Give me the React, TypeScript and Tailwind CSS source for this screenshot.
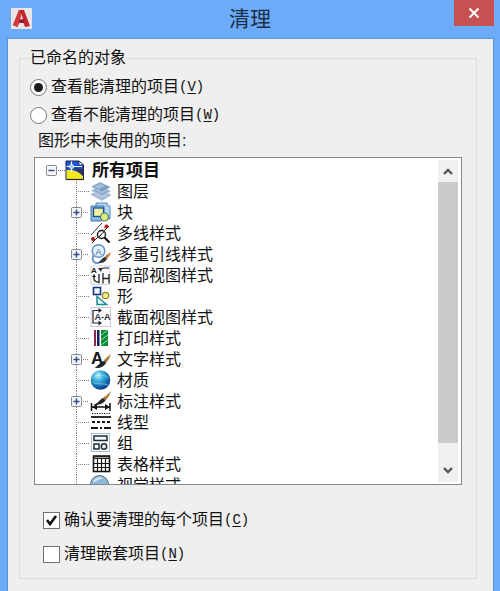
import { useRef, useState, type ReactNode } from "react";

const FONT_CLASSNAME = "font-['Liberation_Sans','Noto_Sans_CJK_SC',sans-serif]";

function BrushShape() {
  return (
    <>
      <path d="M21 5 L15 10 L13 13 L16 14 L19 10 Z" fill="#a9703c" />
      <path d="M20 5.500 L15 10.500" stroke="#e3b884" strokeWidth="1" />
      <path d="M14 12 L16 14 C14 18 8 20 4 18.500 C8 18 9 13.500 14 12 Z" fill="#1d2227" />
    </>
  );
}

const ICONS: Record<string, ReactNode> = {
  layer: (
    <g strokeWidth="0.6">
      <path d="M1 13.500 L10 9 L21 14 L12 19.500 Z" fill="#a9bfd8" stroke="#8fa9c6" />
      <path d="M1 9.500 L10 5 L21 10 L12 15.500 Z" fill="#8fadcd" stroke="#e6eef7" />
      <path d="M1 5.500 L10 1 L21 6 L12 11.500 Z" fill="#7d9dc2" stroke="#e9f0f8" />
      <path d="M4 5.500 L10 2.500 L15 5 L9 8 Z" fill="#a5bedb" />
    </g>
  ),
  block: (
    <>
      <path d="M6 1 H17 L20 4 V17 H6 Z" fill="#b4d5f2" stroke="#4d86bd" />
      <path d="M1 4 H14 V17 L11 19 H1 Z" fill="#8dbbe6" stroke="#3d74ad" />
      <path d="M17 1 V4 H20" fill="#e7f3fd" stroke="#4d86bd" strokeWidth="0.7" />
      <rect x="3.500" y="6" width="10" height="8.500" fill="#eaf3a2" stroke="#244f86" strokeWidth="1.3" />
      <circle cx="14.500" cy="15" r="4" fill="#dcea7e" stroke="#4e7a76" strokeWidth="1.2" />
    </>
  ),
  mline: (
    <>
      <path d="M1 12 L12 0 M2 20 L19 3" stroke="#333" strokeWidth="1" />
      <path d="M3 16 L16 3.500" stroke="#b66" strokeWidth="1" strokeDasharray="2 1" />
      <circle cx="16.500" cy="3.500" r="2" fill="#c3131a" />
      <circle cx="3" cy="16" r="2" fill="#a5131a" />
      <circle cx="11.500" cy="11.500" r="4" fill="#fff" fillOpacity="0.7" stroke="#222" strokeWidth="1.4" />
      <path d="M9 14 L14 9" stroke="#444" strokeWidth="1" />
      <path d="M14.500 14.500 L19.500 19.500" stroke="#111" strokeWidth="2.2" />
    </>
  ),
  mleader: (
    <>
      <path d="M4 11 C2 14 2 17 5 18.500 C8 20 11 18 12 16" fill="none" stroke="#6d9ac8" strokeWidth="2" />
      <circle cx="8.500" cy="7" r="6.300" fill="#e2eefa" stroke="#6394c6" strokeWidth="1.5" />
      <text x="8.500" y="10.500" textAnchor="middle" fontSize="9" fontFamily="Liberation Sans, sans-serif" fill="#3d72ab">
        A
      </text>
      <path d="M21 8 L15 12 L14 15 L17 15 L20 11 Z" fill="#c47b42" />
      <path d="M14.500 13 L17 15 C15 19 11 19.500 8 18.500 C11 17.500 11 14.500 14.500 13 Z" fill="#30353a" />
    </>
  ),
  localView: (
    <>
      <rect x="1" y="1" width="19" height="18.500" fill="#fafafc" stroke="#c9cad8" strokeWidth="0.8" />
      <text x="1" y="8" fontSize="8" fontWeight="bold" fontFamily="Liberation Sans, sans-serif" fill="#222">
        A
      </text>
      <path d="M19 3 H14 C12 3 11 4 10 5" fill="none" stroke="#222" strokeWidth="1.2" />
      <path d="M8 3 L12 3 L11 7 Z M2 12 L4 9 L6 12 Z" fill="#222" />
      <path d="M4 11 V14 C4 16.500 7 17 9 17.500 V9 M13 18.500 V8 M19 18.500 V9 M13 13.500 H19" fill="none" stroke="#222" strokeWidth="1.3" />
    </>
  ),
  shape: (
    <>
      <rect x="3.500" y="1.500" width="7" height="7" fill="#f3f7ff" stroke="#18348c" strokeWidth="1.6" />
      <circle cx="15.500" cy="9.500" r="3.200" fill="#f1ec86" stroke="#8a8425" strokeWidth="1.2" />
      <path d="M7 10.500 V18.500 H16.500 Z" fill="#eefcfa" stroke="#198f91" strokeWidth="1.5" />
    </>
  ),
  sectionView: (
    <>
      <rect x="1" y="0.500" width="19.500" height="19" fill="#fbfbfd" stroke="#c9b9cc" strokeWidth="0.8" />
      <path d="M10 3.500 H3 V16 H10" fill="none" stroke="#26262e" strokeWidth="1.2" />
      <path d="M8.500 1 L12 3.500 L8.500 6 Z M8.500 13.500 L12 16 L8.500 18.500 Z" fill="#26262e" />
      <text x="4.500" y="12.500" fontSize="9" fontWeight="bold" fontFamily="Liberation Sans, sans-serif" fill="#33333c">
        A-A
      </text>
    </>
  ),
  plot: (
    <>
      <rect x="4" y="2" width="2" height="16" fill="#8c2a49" />
      <rect x="7" y="2" width="2.500" height="16" fill="#171c63" />
      <rect x="11" y="2" width="7" height="16" fill="#0c8a35" />
      <path d="M11 7 L18 2 M11 12 L18 7 M11 17 L18 12" stroke="#9be0a9" strokeWidth="1" />
    </>
  ),
  text: (
    <>
      <text x="1" y="15" fontSize="17" fontWeight="bold" fontFamily="Liberation Sans, sans-serif" fill="#15171a">
        A
      </text>
      <BrushShape />
    </>
  ),
  material: (
    <>
      <defs>
        <radialGradient id="material-ball" cx="0.38" cy="0.28" r="0.75">
          <stop offset="0" stopColor="#d9f8ff" />
          <stop offset="0.3" stopColor="#4bbbe2" />
          <stop offset="0.7" stopColor="#176fb5" />
          <stop offset="1" stopColor="#152f86" />
        </radialGradient>
      </defs>
      <circle cx="10.500" cy="10" r="9.800" fill="url(#material-ball)" />
      <path d="M3 8 C6 5 8 8 11 6 S16 6 18 8 M3 12 C7 16 12 12 18 15" fill="none" stroke="#74dbe8" strokeWidth="1.2" strokeOpacity="0.6" />
    </>
  ),
  dimension: (
    <>
      <path d="M21 0 L14 6 L12 9 L15 10 L19 5 Z" fill="#b06e36" />
      <path d="M20.500 0.500 L15 6" stroke="#efc795" strokeWidth="1" />
      <path d="M13 7 L15.500 9.500 C13 13 8 14.500 3 14 C8 12.500 9 9 13 7 Z" fill="#22272b" />
      <path d="M1.500 12 V20 M20 12 V20 M2 16 H20" stroke="#111" strokeWidth="1.5" />
      <path d="M2 16 L7 13 V19 Z M20 16 L15 13 V19 Z" fill="#111" />
    </>
  ),
  linetype: (
    <g stroke="#161616">
      <path d="M2 1.500 H21" strokeWidth="1.2" strokeDasharray="1.2 1.2" />
      <path d="M1 5 H21" strokeWidth="1.8" />
      <path d="M2 10 H21" strokeWidth="1.8" strokeDasharray="3 2" />
      <path d="M1 16 H21" strokeWidth="1.8" strokeDasharray="7 2 2 2" />
    </g>
  ),
  group: (
    <>
      <rect x="1.500" y="0.500" width="18" height="18" fill="none" stroke="#4c79a6" strokeDasharray="1 1" />
      <g fill="#f4f8fb" stroke="#1d2a33" strokeWidth="1.5">
        <rect x="4" y="3" width="13" height="4.500" />
        <rect x="4" y="11" width="5" height="5" />
        <circle cx="14" cy="13.500" r="2.700" />
      </g>
    </>
  ),
  table: (
    <>
      <rect x="3.500" y="2" width="16" height="15.500" fill="#fff" stroke="#161616" strokeWidth="1.6" />
      <path d="M3 2 H20 V5 H3 Z" fill="#222" />
      <path d="M4.500 3.500 H18.500" stroke="#bbb" strokeWidth="0.8" />
      <path d="M7.500 5 V17 M11.500 5 V17 M15.500 5 V17 M4 9.500 H19 M4 13.500 H19" stroke="#161616" strokeWidth="1.2" />
    </>
  ),
  visual: (
    <>
      <circle cx="9.500" cy="9.500" r="9" fill="#8fb9d6" stroke="#56708a" strokeWidth="1" />
      <path d="M3 8 C4 3 10 1 13 3 C9 4 6 6 3 8 Z" fill="#d3e8f5" />
    </>
  ),
};

type TreeItem = {
  label: string;
  icon: string;
  expandable?: boolean;
};

const ITEMS: TreeItem[] = [
  { label: "图层", icon: "layer" },
  { label: "块", icon: "block", expandable: true },
  { label: "多线样式", icon: "mline" },
  { label: "多重引线样式", icon: "mleader", expandable: true },
  { label: "局部视图样式", icon: "localView" },
  { label: "形", icon: "shape" },
  { label: "截面视图样式", icon: "sectionView" },
  { label: "打印样式", icon: "plot" },
  { label: "文字样式", icon: "text", expandable: true },
  { label: "材质", icon: "material" },
  { label: "标注样式", icon: "dimension", expandable: true },
  { label: "线型", icon: "linetype" },
  { label: "组", icon: "group" },
  { label: "表格样式", icon: "table" },
  { label: "视觉样式", icon: "visual" },
];

function ExpanderBox({ open }: { open: boolean }) {
  return (
    <>
      <rect x="0.500" y="5.500" width="10" height="10" rx="1" fill="#f4f5f8" stroke="#858a94" />
      <path d={open ? "M2.500 10.500 H8.500" : "M2.500 10.500 H8.500 M5.500 7.500 V13.500"} stroke="#2f4a86" strokeWidth="1.4" />
    </>
  );
}

function Connector({ expandable }: { expandable?: boolean }) {
  return (
    <svg width="19" height="21" viewBox="0 0 19 21" fill="none" aria-hidden="true">
      <path d="M5.500 0 V21" stroke="#808080" strokeDasharray="1 1" />
      <path d={expandable ? "M12 10.500 H18" : "M7 10.500 H18"} stroke="#808080" strokeDasharray="1 1" />
      {expandable && <ExpanderBox open={false} />}
    </svg>
  );
}

function RootIcon() {
  return (
    <svg width="20" height="21" viewBox="0 0 20 21" className="shrink-0" aria-hidden="true">
      <path d="M1 1 H14 L18.500 5 V19.500 H1 Z" fill="#1f55cf" stroke="#1a2550" />
      <path d="M1.500 10 C8 9.500 13 11 18 16 V19 H1.500 Z" fill="#f6e51c" />
      <path d="M9 8 L18 9 V16 C15 13 12 11 9 8 Z" fill="#2c2f66" />
      <path d="M14 1 V5 H18.500 Z" fill="#fff" stroke="#1a2550" strokeWidth="0.8" />
      <path d="M6.500 1.500 V12 M1.500 6.500 H17" stroke="#fff" strokeWidth="1.2" />
      <circle cx="6.500" cy="6.500" r="2" fill="#8fc6f5" stroke="#fff" strokeWidth="0.8" />
      <path d="M1 19.500 H18.500" stroke="#222" strokeWidth="1.2" />
    </svg>
  );
}

function TreeRow({ item }: { item: TreeItem }) {
  return (
    <li className="flex h-[21px] items-center pl-9">
      {item.expandable ? (
        <button type="button" aria-label={`展开${item.label}`} className="shrink-0">
          <Connector expandable />
        </button>
      ) : (
        <Connector />
      )}
      <svg width="22" height="21" viewBox="0 0 22 21" className="shrink-0" aria-hidden="true">
        {ICONS[item.icon]}
      </svg>
      <span className="ml-[5px] whitespace-nowrap">{item.label}</span>
    </li>
  );
}

function ScrollArrow({ label, d, onClick }: { label: string; d: string; onClick: () => void }) {
  return (
    <button type="button" aria-label={label} onClick={onClick} className="flex h-[22px] items-center justify-center">
      <svg width="12" height="10" viewBox="0 0 12 10" fill="none" aria-hidden="true">
        <path d={d} stroke="#555" strokeWidth="2.4" />
      </svg>
    </button>
  );
}

function ItemTree() {
  const [open, setOpen] = useState(true);
  const listRef = useRef<HTMLUListElement>(null);
  const scroll = (top: number) => listRef.current?.scrollBy({ top });

  return (
    <div className="ml-1 flex h-[328px] border border-[#828790] bg-white">
      <ul ref={listRef} className="min-w-0 flex-1 overflow-hidden pt-[2px] leading-[21px]">
        <li>
          <div className="flex h-[21px] items-center pl-[11px]">
            <button
              type="button"
              aria-label="所有项目"
              aria-expanded={open}
              onClick={() => setOpen(!open)}
              className="shrink-0"
            >
              <svg width="19" height="21" viewBox="0 0 19 21" fill="none" aria-hidden="true">
                <path d="M12 10.500 H19" stroke="#808080" strokeDasharray="1 1" />
                <ExpanderBox open={open} />
              </svg>
            </button>
            <RootIcon />
            <span className="ml-[7px] text-[17px] font-bold">所有项目</span>
          </div>
          {open && (
            <ul>
              {ITEMS.map((item) => (
                <TreeRow key={item.label} item={item} />
              ))}
            </ul>
          )}
        </li>
      </ul>
      <div className="my-[2px] mr-[3px] flex w-5 flex-col bg-[#f0f0f0]">
        <ScrollArrow label="向上滚动" d="M2 8 L6 4 L10 8" onClick={() => scroll(-21)} />
        <div className="flex-1">
          <div className="h-[94%] bg-[#cbcbcb]" />
        </div>
        <ScrollArrow label="向下滚动" d="M2 2 L6 6 L10 2" onClick={() => scroll(21)} />
      </div>
    </div>
  );
}

function Mnemonic({ char }: { char: string }) {
  return (
    <span className="font-['Liberation_Mono',monospace] text-[14px]">
      (<span className="underline underline-offset-2">{char}</span>)
    </span>
  );
}

type OptionProps = {
  label: string;
  char: string;
  defaultChecked?: boolean;
};

function RadioOption({ label, char, defaultChecked }: OptionProps) {
  return (
    <label className="flex h-7 items-center">
      <input
        type="radio"
        name="purge-view"
        defaultChecked={defaultChecked}
        className="mr-1 grid size-[17px] shrink-0 appearance-none place-items-center rounded-full border border-[#777] bg-white before:size-[9px] before:rounded-full before:content-[''] checked:before:bg-[#1c1c1c]"
      />
      {label}
      <Mnemonic char={char} />
    </label>
  );
}

function CheckOption({ label, char, defaultChecked }: OptionProps) {
  return (
    <label className="flex h-[34px] items-center">
      <span className="mr-1 grid shrink-0 place-items-center">
        <input
          type="checkbox"
          defaultChecked={defaultChecked}
          className="peer col-start-1 row-start-1 size-[17px] appearance-none border border-[#707070] bg-white"
        />
        <svg
          width="13"
          height="13"
          viewBox="0 0 13 13"
          fill="none"
          className="pointer-events-none invisible col-start-1 row-start-1 peer-checked:visible"
          aria-hidden="true"
        >
          <path d="M2 6 L5 10 L11 2" stroke="#111" strokeWidth="2.6" />
        </svg>
      </span>
      {label}
      <Mnemonic char={char} />
    </label>
  );
}

function TitleBar() {
  return (
    <header className="grid h-[38px] grid-cols-[1fr_auto_1fr] items-start">
      <svg width="21" height="21" viewBox="0 0 21 21" className="mt-2 ml-[11px]" aria-hidden="true">
        <rect width="21" height="21" fill="#e9e4e6" />
        <path d="M8 2 H13 L19 18 L14 19 L12.500 15 H8 L6.500 19 L2 17 Z M10.500 6 L9 11.500 H12 Z" fill="#c1272d" fillRule="evenodd" />
        <path d="M8 2 L10.500 6 L6.500 19 L2 17 Z" fill="#cf3a3f" />
        <path d="M8 15 L12.500 15 L14 12 L9 11.500 Z" fill="#8f1b20" />
      </svg>
      <h1 className="text-[21px] leading-[38px] text-[#1b2f4a]">清理</h1>
      <button
        type="button"
        aria-label="关闭"
        className="mr-[6px] flex h-[26px] w-10 items-center justify-center justify-self-end bg-[#c75050]"
      >
        <svg width="12" height="12" viewBox="0 0 12 12" fill="none" aria-hidden="true">
          <path d="M1.500 1.500 L10.500 10.500 M10.500 1.500 L1.500 10.500" stroke="#fff" strokeWidth="2" />
        </svg>
      </button>
    </header>
  );
}

export default function App() {
  return (
    <div className={`${FONT_CLASSNAME} flex min-h-screen flex-col bg-[#6babf7] text-[16px] text-[#111]`}>
      <TitleBar />
      <main className="mr-[6px] ml-[7px] flex-1 border-x border-t border-[#5b93d6] bg-[#efefef] pt-[9px] pr-4 pl-[11px]">
        <fieldset className="min-w-0 border border-[#dcdcdc] pr-[14px] pb-[7px] pl-[10px]">
          <legend className="h-5 leading-5">已命名的对象</legend>
          <div className="mt-[5px]">
            <RadioOption label="查看能清理的项目" char="V" defaultChecked />
            <RadioOption label="查看不能清理的项目" char="W" />
          </div>
          <h2 className="mb-1 ml-2 h-6 leading-6">图形中未使用的项目:</h2>
          <ItemTree />
          <div className="mt-[18px] ml-[13px]">
            <CheckOption label="确认要清理的每个项目" char="C" defaultChecked />
            <CheckOption label="清理嵌套项目" char="N" />
          </div>
        </fieldset>
      </main>
    </div>
  );
}
